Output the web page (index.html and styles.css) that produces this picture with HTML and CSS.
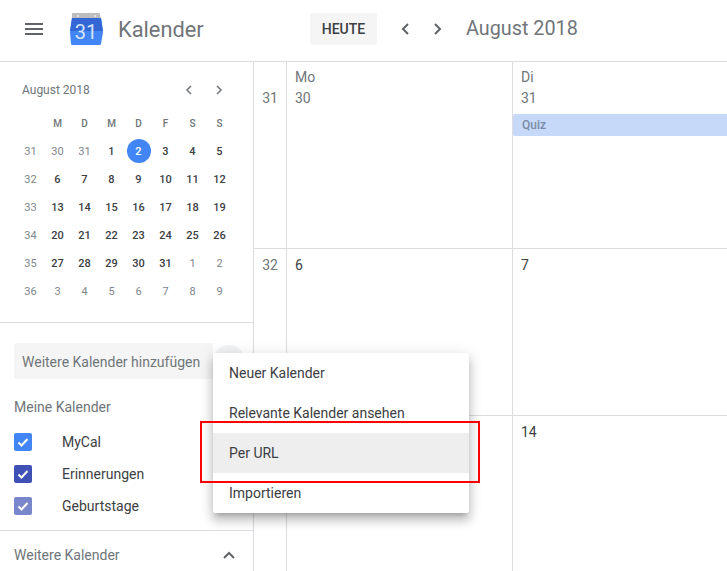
FILE: index.html
```html
<!DOCTYPE html>
<html>
  <head>
    <meta charset="utf-8">
    <title>Kalender</title>
    <link rel="stylesheet" href="styles.css">
  </head>
  <body>
    <header class="topbar">
      <div class="brand">
        <svg class="burger" width="18" height="12" viewBox="0 0 18 12">
          <path d="M0 0h18v2H0zM0 5h18v2H0zM0 10h18v2H0z" fill="#5f6368"/>
        </svg>
        <svg class="logo" width="35" height="34" viewBox="0 0 35 34">
          <path d="M3 2q0-1 1-1h26q1 0 1 1l1 6H3z" fill="#bdbdbd"/>
          <circle cx="9" cy="4" r="1" fill="#eee"/>
          <circle cx="26" cy="4" r="1" fill="#eee"/>
          <path d="M3 6h29l2 14-2 12q0 1-2 1H4q-2 0-2-1L1 20z" fill="#4285f4"/>
          <path d="M3 6h29l2 13H1z" fill="#3367d6"/>
          <text x="17" y="27" class="logo-num">31</text>
        </svg>
        <span class="brand-name">Kalender</span>
      </div>
      <div class="toolbar">
        <button class="today">HEUTE</button>
        <svg class="nav-prev" width="8" height="12" viewBox="0 0 8 12"><path d="M7 1 2 6l5 5" class="chev"/></svg>
        <svg class="nav-next" width="8" height="12" viewBox="0 0 8 12"><path d="M1 1l5 5-5 5" class="chev"/></svg>
        <span class="range">August 2018</span>
      </div>
    </header>

    <div class="content">
      <aside class="sidebar">
        <section class="mini">
          <div class="mini-head">
            <span class="mini-title">August 2018</span>
            <svg class="mini-prev" width="7" height="10" viewBox="0 0 7 10"><path d="M6 1 2 5l4 4" class="chev thin"/></svg>
            <svg class="mini-next" width="7" height="10" viewBox="0 0 7 10"><path d="M1 1l4 4-4 4" class="chev thin"/></svg>
          </div>
          <div class="mini-grid">
            <span></span><span class="wd">M</span><span class="wd">D</span><span class="wd">M</span><span class="wd">D</span><span class="wd">F</span><span class="wd">S</span><span class="wd">S</span>
            <span class="wk">31</span><span class="off">30</span><span class="off">31</span><span>1</span><span class="sel"><b>2</b></span><span>3</span><span>4</span><span>5</span>
            <span class="wk">32</span><span>6</span><span>7</span><span>8</span><span>9</span><span>10</span><span>11</span><span>12</span>
            <span class="wk">33</span><span>13</span><span>14</span><span>15</span><span>16</span><span>17</span><span>18</span><span>19</span>
            <span class="wk">34</span><span>20</span><span>21</span><span>22</span><span>23</span><span>24</span><span>25</span><span>26</span>
            <span class="wk">35</span><span>27</span><span>28</span><span>29</span><span>30</span><span>31</span><span class="off">1</span><span class="off">2</span>
            <span class="wk">36</span><span class="off">3</span><span class="off">4</span><span class="off">5</span><span class="off">6</span><span class="off">7</span><span class="off">8</span><span class="off">9</span>
          </div>
        </section>

        <section class="calendars">
          <div class="add-row">
            <div class="add-box">Weitere Kalender hinzufügen</div>
            <div class="add-btn"></div>
          </div>
          <div class="group-title">Meine Kalender</div>
          <div class="cal-row">
            <span class="check blue"><svg width="18" height="18" viewBox="0 0 18 18"><path d="m4.500 9.500 3 3 6-6.500" class="tick"/></svg></span>
            MyCal
          </div>
          <div class="cal-row">
            <span class="check indigo"><svg width="18" height="18" viewBox="0 0 18 18"><path d="m4.500 9.500 3 3 6-6.500" class="tick"/></svg></span>
            Erinnerungen
          </div>
          <div class="cal-row">
            <span class="check lilac"><svg width="18" height="18" viewBox="0 0 18 18"><path d="m4.500 9.500 3 3 6-6.500" class="tick"/></svg></span>
            Geburtstage
          </div>
        </section>

        <section class="other">
          <span>Weitere Kalender</span>
          <svg width="12" height="8" viewBox="0 0 12 8"><path d="m1 7 5-5 5 5" class="chev"/></svg>
        </section>
      </aside>

      <main class="month">
        <div class="week-no first"><span>31</span></div>
        <div class="day first"><div class="dow">Mo</div><div class="num muted">30</div></div>
        <div class="day first last">
          <div class="dow">Di</div><div class="num muted">31</div>
          <div class="event">Quiz</div>
        </div>
        <div class="week-no second"><span>32</span></div>
        <div class="day second"><div class="num">6</div></div>
        <div class="day second last"><div class="num">7</div></div>
        <div class="week-no third"><span>33</span></div>
        <div class="day third"><div class="num">13</div></div>
        <div class="day third last"><div class="num">14</div></div>
      </main>
    </div>

    <div class="menu">
      <div class="menu-item">Neuer Kalender</div>
      <div class="menu-item">Relevante Kalender ansehen</div>
      <div class="menu-item active">Per URL</div>
      <div class="menu-item">Importieren</div>
    </div>
    <div class="highlight"></div>
  </body>
</html>
```

FILE: styles.css
```css
html,
body {
  margin: 0;
  height: 100%;
  overflow: hidden;
}

body {
  font-family: Roboto, "Liberation Sans", sans-serif;
  color: #3c4043;
  background: #fff;
  position: relative;
}

.topbar {
  display: flex;
  height: 58px;
  padding-bottom: 3px;
  border-bottom: 1px solid #dadce0;
}

.brand {
  display: flex;
  align-items: center;
  width: 310px;
  padding-left: 25px;
  box-sizing: border-box;
}

.logo {
  margin-left: 26px;
}

.logo-num {
  font-size: 20px;
  fill: #d6e4fd;
  text-anchor: middle;
}

.brand-name {
  margin-left: 14px;
  font-size: 21.8px;
  color: #70757a;
}

.toolbar {
  display: flex;
  align-items: center;
}

.today {
  width: 67px;
  height: 32px;
  padding: 0;
  border: 0;
  border-radius: 2px;
  background: #f5f5f5;
  font: 500 14px Roboto, sans-serif;
  color: #3c4043;
}

.nav-prev {
  margin-left: 24px;
}

.nav-next {
  margin-left: 25px;
}

.range {
  margin-left: 24px;
  font-size: 19.8px;
  color: #70757a;
  position: relative;
  bottom: 1px;
}

.chev {
  fill: none;
  stroke: #5f6368;
  stroke-width: 2;
}

.chev.thin {
  stroke: #70757a;
  stroke-width: 1.5;
}

.content {
  display: flex;
  height: 510px;
}

.sidebar {
  width: 253px;
  flex: none;
  border-right: 1px solid #dadce0;
}

.mini {
  height: 261px;
  padding: 0 0 0 17px;
  box-sizing: border-box;
  border-bottom: 1px solid #dadce0;
}

.mini-head {
  display: flex;
  align-items: center;
  height: 20px;
  padding: 18px 0 9px 5px;
}

.mini-title {
  width: 163px;
  font-size: 12px;
  color: #70757a;
}

.mini-next {
  margin-left: 24px;
}

.mini-grid {
  display: grid;
  grid-template-columns: repeat(8, 27px);
  grid-auto-rows: 28px;
  font-size: 11px;
  font-weight: 500;
  color: #3c4043;
}

.mini-grid > span {
  display: flex;
  align-items: center;
  justify-content: center;
}

.mini-grid .wd {
  font-size: 10px;
  color: #70757a;
}

.mini-grid .wk {
  font-weight: 400;
  color: #80868b;
}

.mini-grid .off {
  font-weight: 400;
  color: #80868b;
}

.mini-grid .sel b {
  display: flex;
  align-items: center;
  justify-content: center;
  width: 24px;
  height: 24px;
  border-radius: 50%;
  background: #4285f4;
  color: #fff;
  font-weight: 500;
}

.calendars {
  height: 208px;
  padding: 20px 0 0 14px;
  box-sizing: border-box;
  border-bottom: 1px solid #dadce0;
}

.add-row {
  display: flex;
  align-items: center;
}

.add-box {
  width: 199px;
  height: 36px;
  padding-left: 8px;
  box-sizing: border-box;
  background: #f5f5f5;
  border-radius: 2px;
  font-size: 14px;
  line-height: 38px;
  color: #70757a;
  white-space: nowrap;
}

.add-btn {
  width: 32px;
  height: 32px;
  border-radius: 50%;
  background: #f1f3f4;
}

.group-title {
  margin: 18px 0 9px;
  height: 20px;
  font-size: 14px;
  line-height: 20px;
  color: #70757a;
}

.cal-row {
  display: flex;
  align-items: center;
  height: 32px;
  font-size: 14px;
  color: #3c4043;
}

.check {
  display: block;
  width: 18px;
  height: 18px;
  margin-right: 30px;
  border-radius: 2px;
}

.check svg {
  display: block;
}

.tick {
  fill: none;
  stroke: #fff;
  stroke-width: 2;
}

.blue {
  background: #4285f4;
}

.indigo {
  background: #3f51b5;
}

.lilac {
  background: #7986cb;
}

.other {
  display: flex;
  align-items: center;
  justify-content: space-between;
  height: 48px;
  padding: 0 18px 0 14px;
  font-size: 14px;
  color: #70757a;
}

.month {
  flex: 1;
  display: grid;
  grid-template-columns: 33px 226px 1fr;
  grid-template-rows: 187px 167px 1fr;
}

.week-no,
.day {
  box-sizing: border-box;
  border-right: 1px solid #dadce0;
  border-bottom: 1px solid #dadce0;
}

.third {
  border-bottom: 0;
}

.last {
  border-right: 0;
}

.week-no {
  text-align: center;
  font-size: 14px;
  color: #70757a;
}

.week-no.first {
  padding-top: 28px;
}

.week-no.second,
.week-no.third {
  padding-top: 8px;
}

.day {
  padding-top: 6px;
}

.day.first {
  padding-top: 5px;
}

.dow,
.num {
  padding-left: 8px;
  font-size: 14px;
  line-height: 20px;
}

.dow {
  height: 21px;
  color: #70757a;
}

.num {
  color: #3c4043;
}

.num.muted {
  color: #70757a;
}

.event {
  height: 22px;
  margin-top: 6px;
  padding-left: 9px;
  border-radius: 2px 0 0 2px;
  background: #c6d9f9;
  font-size: 12px;
  font-weight: 500;
  line-height: 22px;
  color: #7b8aa8;
}

.menu {
  position: absolute;
  left: 213px;
  top: 353px;
  width: 256px;
  background: #fff;
  border-radius: 2px;
  box-shadow: 0 8px 10px 1px rgba(0, 0, 0, 0.14), 0 3px 14px 2px rgba(0, 0, 0, 0.12), 0 5px 5px -3px rgba(0, 0, 0, 0.2);
}

.menu-item {
  height: 40px;
  padding-left: 16px;
  font-size: 14px;
  line-height: 40px;
  color: #3c4043;
}

.menu-item.active {
  background: #eee;
}

.highlight {
  position: absolute;
  left: 200px;
  top: 421px;
  width: 276px;
  height: 58px;
  border: 2px solid #f00;
}
```
